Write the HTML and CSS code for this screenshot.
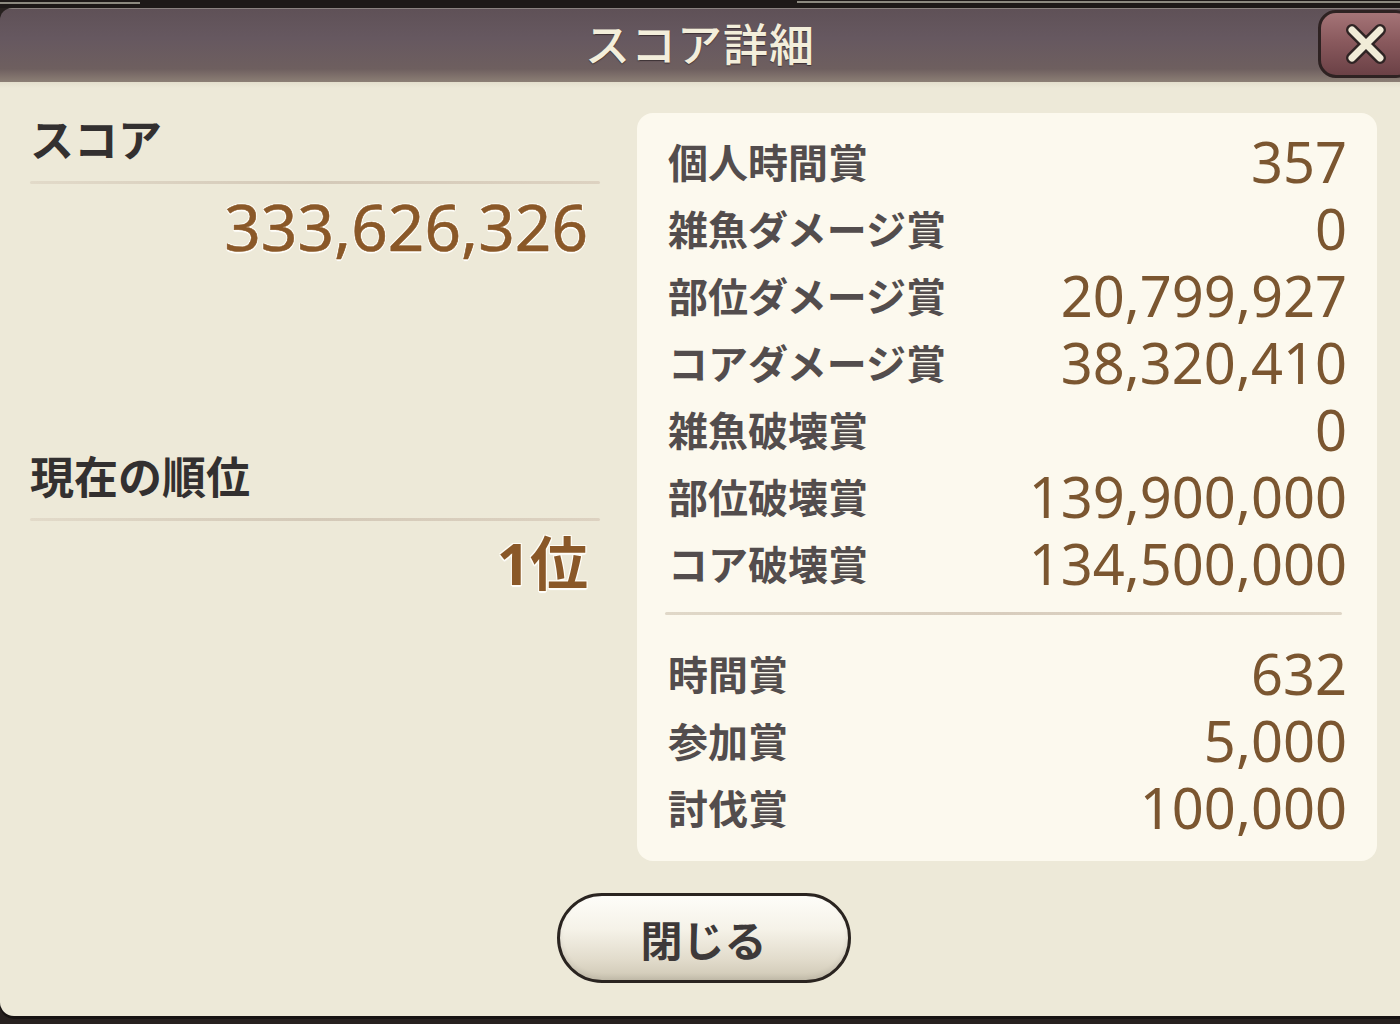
FILE: index.html
```html
<!DOCTYPE html>
<html lang="ja">
<head>
    <meta charset="UTF-8">
    <meta name="viewport" content="width=device-width, initial-scale=1.0">
    <title>スコア詳細</title>
    <link rel="stylesheet" href="styles.css">
</head>
<body>
    <div class="edge"></div>
    <div class="window">
        <div class="header">
            <h1 class="title">スコア詳細</h1>
            <div class="close">
                <svg width="46" height="46" viewBox="0 0 46 46">
                    <path d="M9 9 L37 37 M37 9 L9 37" stroke="#2f2424" stroke-width="12" stroke-linecap="round"/>
                    <path d="M9 9 L37 37 M37 9 L9 37" stroke="#f1ecd8" stroke-width="7" stroke-linecap="round"/>
                </svg>
            </div>
        </div>

        <div class="content">
            <div class="main">
                <div class="summary">
                    <div class="section-label">スコア</div>
                    <div class="rule"></div>
                    <div class="big-value">333,626,326</div>

                    <div class="section-label rank-label">現在の順位</div>
                    <div class="rule"></div>
                    <div class="big-value rank">1位</div>
                </div>

                <div class="panel">
                    <div class="row"><span class="row-label">個人時間賞</span><span class="row-value">357</span></div>
                    <div class="row"><span class="row-label">雑魚ダメージ賞</span><span class="row-value">0</span></div>
                    <div class="row"><span class="row-label">部位ダメージ賞</span><span class="row-value">20,799,927</span></div>
                    <div class="row"><span class="row-label">コアダメージ賞</span><span class="row-value">38,320,410</span></div>
                    <div class="row"><span class="row-label">雑魚破壊賞</span><span class="row-value">0</span></div>
                    <div class="row"><span class="row-label">部位破壊賞</span><span class="row-value">139,900,000</span></div>
                    <div class="row"><span class="row-label">コア破壊賞</span><span class="row-value">134,500,000</span></div>
                    <div class="panel-rule"></div>
                    <div class="row"><span class="row-label">時間賞</span><span class="row-value">632</span></div>
                    <div class="row"><span class="row-label">参加賞</span><span class="row-value">5,000</span></div>
                    <div class="row"><span class="row-label">討伐賞</span><span class="row-value">100,000</span></div>
                </div>
            </div>

            <div class="actions">
                <button class="close-btn">閉じる</button>
            </div>
        </div>
    </div>
</body>
</html>
```

FILE: styles.css
```css
* {
    box-sizing: border-box;
}
html, body {
    margin: 0;
    height: 100%;
}
body {
    background: #27211f;
    overflow: hidden;
    font-family: "Noto Sans CJK JP", sans-serif;
}
.edge {
    height: 8px;
    background:
        linear-gradient(#8d8a80, #8d8a80) 0 2px / 140px 2px no-repeat,
        linear-gradient(#8d8a80, #8d8a80) 797px 1px / 603px 2px no-repeat,
        #1e1918;
}
.window {
    height: 1008px;
    display: flex;
    flex-direction: column;
    border-radius: 12px 0 0 14px;
    overflow: hidden;
    box-shadow: 0 3px 0 #171312;
}
.header {
    position: relative;
    height: 74px;
    display: flex;
    align-items: center;
    justify-content: center;
    padding-bottom: 7px;
    background: linear-gradient(#5f5157, #665860 40%, #6e5f5f 82%, #8c7f75);
    border-top: 1px solid #8b8280;
}
.title {
    margin: 0;
    font-size: 45px;
    line-height: 1;
    font-weight: 500;
    color: #f3eedb;
    letter-spacing: 1px;
    text-shadow: 0 1px 1px #3c3135;
}
.close {
    position: absolute;
    top: 1px;
    right: -14px;
    width: 96px;
    height: 68px;
    display: flex;
    align-items: center;
    padding-left: 22px;
    border: 3px solid #2e2222;
    border-radius: 18px;
    background: linear-gradient(#a57477, #8a5a5e 45%, #6b4146);
}
.content {
    flex: 1;
    display: flex;
    flex-direction: column;
    padding: 31px 23px 0 30px;
    background: linear-gradient(#e4dfcd, #ede9d8 6px);
}
.main {
    display: grid;
    grid-template-columns: 570px 740px;
    column-gap: 37px;
}
.section-label {
    font-size: 44px;
    line-height: 50px;
    font-weight: bold;
    color: #333030;
}
.rank-label {
    margin-top: 188px;
}
.rule {
    height: 3px;
    margin-top: 18px;
    border-radius: 2px;
    background: linear-gradient(90deg, #e2dac9, #d4c9b8 50%, #ddd2c1);
}
.big-value {
    margin-top: 8px;
    padding-right: 12px;
    text-align: right;
    font-family: "Noto Sans", "Noto Sans CJK JP", sans-serif;
    font-size: 64px;
    line-height: 70px;
    color: #8a5828;
    -webkit-text-stroke: 0.6px #8a5828;
    text-shadow: 1px 1px 0 #fffdf6, -1px -1px 0 #fffdf6, 1px -1px 0 #fffdf6, -1px 1px 0 #fffdf6, 0 2px 1px #fff;
}
.rank {
    margin-top: 10px;
    font-size: 58px;
    line-height: 64px;
    font-weight: bold;
    -webkit-text-stroke: 0;
}
.panel {
    padding: 14px 30px 21px 31px;
    border-radius: 16px;
    background: #fcf9ee;
}
.row {
    height: 67px;
    display: flex;
    align-items: center;
    justify-content: space-between;
}
.row-label {
    font-size: 40px;
    line-height: 1;
    font-weight: bold;
    color: #534d4d;
}
.row-value {
    font-family: "Noto Sans", sans-serif;
    font-size: 56px;
    line-height: 1;
    color: #7b5630;
}
.panel-rule {
    height: 3px;
    margin: 16px 5px 24px -3px;
    border-radius: 2px;
    background: linear-gradient(90deg, #e0d8c8, #d8cdbd 50%, #e0d7c7);
}
.actions {
    display: flex;
    justify-content: center;
    margin-top: 32px;
}
.close-btn {
    width: 294px;
    height: 90px;
    border: 3px solid #2a2420;
    border-radius: 45px;
    background: linear-gradient(#fefdf9, #f5f2e8 40%, #e2dccc 75%, #cec7b4);
    box-shadow: inset 0 -3px 5px rgba(0, 0, 0, 0.08);
    font-family: "Noto Sans CJK JP", sans-serif;
    font-size: 42px;
    font-weight: bold;
    color: #3d3939;
}
```
